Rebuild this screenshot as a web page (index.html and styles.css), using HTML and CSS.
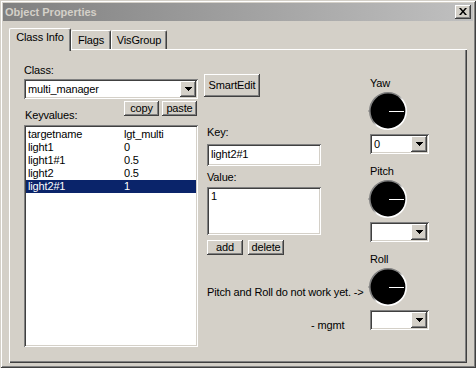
FILE: index.html
```html
<!DOCTYPE html>
<html lang="en">

<head>
  <meta charset="UTF-8" />
  <title>Object Properties</title>
  <link rel="stylesheet" href="styles.css">
</head>

<body>
  <div class="window">
    <div class="titlebar">
      <span class="title">Object Properties</span>
      <button class="close raised">
        <svg width="8" height="7" viewBox="0 0 8 7"><path d="M0 0h2l2 2.5L6 0h2L5 3.5 8 7H6L4 4.5 2 7H0l3-3.5z" /></svg>
      </button>
    </div>

    <div class="tabs">
      <div class="tab active">Class Info</div>
      <div class="tab tab-flags">Flags</div>
      <div class="tab tab-vis">VisGroup</div>
    </div>

    <div class="panel">
      <div class="col-left">
        <div class="label">Class:</div>
        <div class="combo combo-class sunken">
          <span class="combo-text">multi_manager</span>
          <span class="drop raised"><svg width="7" height="4"><path d="M0 0h7v1H0zM1 1h5v1H1zM2 2h3v1H2zM3 3h1v1H3z" /></svg></span>
        </div>
        <div class="kv-head">
          <span class="label">Keyvalues:</span>
          <div class="kv-buttons">
            <button class="btn raised btn-small">copy</button>
            <button class="btn raised btn-small">paste</button>
          </div>
        </div>
        <div class="listbox sunken">
          <div class="row"><span class="key">targetname</span><span>lgt_multi</span></div>
          <div class="row"><span class="key">light1</span><span>0</span></div>
          <div class="row"><span class="key">light1#1</span><span>0.5</span></div>
          <div class="row"><span class="key">light2</span><span>0.5</span></div>
          <div class="row selected"><span class="key">light2#1</span><span>1</span></div>
        </div>
      </div>

      <div class="col-mid">
        <button class="btn raised btn-smartedit">SmartEdit</button>
        <div class="label key-label">Key:</div>
        <div class="field sunken key-field">light2#1</div>
        <div class="label value-label">Value:</div>
        <div class="field sunken value-field">1</div>
        <div class="kv-actions">
          <button class="btn raised btn-small">add</button>
          <button class="btn raised btn-small">delete</button>
        </div>
        <div class="note">Pitch and Roll do not work yet. -&gt;</div>
        <div class="note-sign">- mgmt</div>
      </div>

      <div class="col-right">
        <div class="label">Yaw</div>
        <svg class="dial" width="40" height="39" viewBox="0 0 40 39">
          <defs>
            <linearGradient id="rim" x1="0" y1="0" x2="1" y2="1">
              <stop offset="0.45" stop-color="#808080" />
              <stop offset="0.55" stop-color="#ffffff" />
            </linearGradient>
          </defs>
          <path d="M0 19h2" stroke="#808080" />
          <circle cx="20" cy="19" r="18.2" fill="#000" stroke="url(#rim)" stroke-width="1.6" />
          <path d="M21 19.5h15" stroke="#fff" />
        </svg>
        <div class="combo combo-angle sunken">
          <span class="combo-text">0</span>
          <span class="drop raised"><svg width="7" height="4"><path d="M0 0h7v1H0zM1 1h5v1H1zM2 2h3v1H2zM3 3h1v1H3z" /></svg></span>
        </div>

        <div class="label angle-label">Pitch</div>
        <svg class="dial" width="40" height="39" viewBox="0 0 40 39">
          <path d="M0 19h2" stroke="#808080" />
          <circle cx="20" cy="19" r="18.2" fill="#000" stroke="url(#rim)" stroke-width="1.6" />
          <path d="M21 19.5h15" stroke="#fff" />
        </svg>
        <div class="combo combo-angle sunken">
          <span class="combo-text"></span>
          <span class="drop raised"><svg width="7" height="4"><path d="M0 0h7v1H0zM1 1h5v1H1zM2 2h3v1H2zM3 3h1v1H3z" /></svg></span>
        </div>

        <div class="label angle-label">Roll</div>
        <svg class="dial" width="40" height="39" viewBox="0 0 40 39">
          <path d="M0 19h2" stroke="#808080" />
          <circle cx="20" cy="19" r="18.2" fill="#000" stroke="url(#rim)" stroke-width="1.6" />
          <path d="M21 19.5h15" stroke="#fff" />
        </svg>
        <div class="combo combo-angle sunken">
          <span class="combo-text"></span>
          <span class="drop raised"><svg width="7" height="4"><path d="M0 0h7v1H0zM1 1h5v1H1zM2 2h3v1H2zM3 3h1v1H3z" /></svg></span>
        </div>
      </div>
    </div>
  </div>
</body>

</html>
```

FILE: styles.css
```css
* {
  box-sizing: border-box;
}

body {
  margin: 0;
  background: #d4d0c8;
  font-family: 'Liberation Sans', Arial, sans-serif;
  font-size: 11px;
  line-height: 13px;
  letter-spacing: -0.15px;
  color: #000;
}

.raised {
  background: #d4d0c8;
  box-shadow: inset -1px -1px #404040, inset 1px 1px #ffffff, inset -2px -2px #808080, inset 2px 2px #d4d0c8;
}

.sunken {
  background: #ffffff;
  box-shadow: inset 1px 1px #808080, inset -1px -1px #ffffff, inset 2px 2px #404040, inset -2px -2px #d4d0c8;
}

.window {
  width: 476px;
  height: 368px;
  padding: 3px;
  background: #d4d0c8;
  box-shadow: inset 1px 1px #d4d0c8, inset -1px -1px #404040, inset 2px 2px #ffffff, inset -2px -2px #808080;
}

.titlebar {
  height: 18px;
  display: flex;
  align-items: center;
  justify-content: space-between;
  padding: 0 2px;
  background: linear-gradient(to right, #808080, #c0c0c0);
}

.title {
  color: #d4d0c8;
  font-weight: bold;
  font-size: 11px;
  letter-spacing: 0;
}

.close {
  width: 16px;
  height: 14px;
  padding: 0;
  border: 0;
  display: flex;
  align-items: center;
  justify-content: center;
}

.close svg {
  display: block;
  margin: 0 1px 1px 0;
}

/* tab strip */
.tabs {
  display: flex;
  align-items: flex-end;
  height: 21px;
  margin: 7px 0 0 6px;
  position: relative;
  z-index: 1;
}

.tab {
  height: 19px;
  padding-top: 3px;
  text-align: center;
  background: #d4d0c8;
  border-left: 1px solid #ffffff;
  border-top: 1px solid #ffffff;
  border-right: 1px solid #404040;
  border-radius: 2px 2px 0 0;
  box-shadow: inset -1px 0 #808080;
}

.tab.active {
  width: 62px;
  height: 23px;
  padding-top: 2px;
  margin-bottom: -2px;
}

.tab-flags {
  width: 40px;
}

.tab-vis {
  width: 56px;
}

.panel {
  width: 458px;
  height: 314px;
  margin-left: 6px;
  display: flex;
  align-items: flex-start;
  box-shadow: inset 1px 1px #ffffff, inset -1px -1px #404040, inset -2px -2px #808080;
}

.btn {
  border: 0;
  padding: 0;
  font: inherit;
  letter-spacing: inherit;
  color: #000;
  text-align: center;
}

.btn-small {
  height: 15px;
  line-height: 13px;
}

/* left column */
.col-left {
  width: 174px;
  margin-left: 15px;
  padding-top: 15px;
}

.combo {
  display: flex;
  align-items: center;
  justify-content: space-between;
  padding: 2px;
  height: 20px;
}

.combo-class {
  margin-top: 2px;
}

.combo-text {
  padding-left: 2px;
}

.drop {
  width: 16px;
  height: 16px;
  display: flex;
  align-items: center;
  justify-content: center;
}

.drop svg {
  display: block;
}

.kv-head {
  display: flex;
  justify-content: space-between;
  align-items: flex-start;
  height: 24px;
  margin-top: 2px;
}

.kv-head .label {
  padding: 8px 0 0 1px;
}

.kv-buttons {
  display: flex;
  gap: 3px;
  margin-right: 1px;
}

.kv-buttons .btn {
  width: 35px;
}

.listbox {
  height: 222px;
  padding: 3px 2px;
}

.row {
  display: flex;
  height: 13px;
  padding-left: 2px;
}

.row .key {
  width: 96px;
}

.row.selected {
  background: #0a246a;
  color: #ffffff;
}

/* middle column */
.col-mid {
  width: 165px;
  margin-left: 6px;
  padding-top: 25px;
  white-space: nowrap;
}

.btn-smartedit {
  width: 56px;
  height: 23px;
}

.col-mid .label,
.col-mid .field,
.kv-actions,
.note {
  margin-left: 3px;
}

.key-label {
  margin-top: 29px;
}

.field {
  width: 114px;
  padding: 3px 4px;
}

.key-field {
  height: 22px;
  margin-top: 5px;
  padding-top: 4px;
}

.value-label {
  margin-top: 5px;
}

.value-field {
  height: 48px;
  margin-top: 3px;
}

.kv-actions {
  display: flex;
  gap: 5px;
  margin-top: 5px;
}

.kv-actions .btn {
  width: 36px;
}

.note {
  margin-top: 31px;
}

.note-sign {
  margin: 20px 0 0 107px;
}

/* right column */
.col-right {
  width: 70px;
  padding-top: 28px;
}

.col-right .label {
  padding-left: 1px;
}

.dial {
  display: block;
  margin: 2px 0 0 -1px;
}

.combo-angle {
  width: 59px;
  margin: 3px 0 0 1px;
}

.angle-label {
  margin-top: 11px;
}
```
